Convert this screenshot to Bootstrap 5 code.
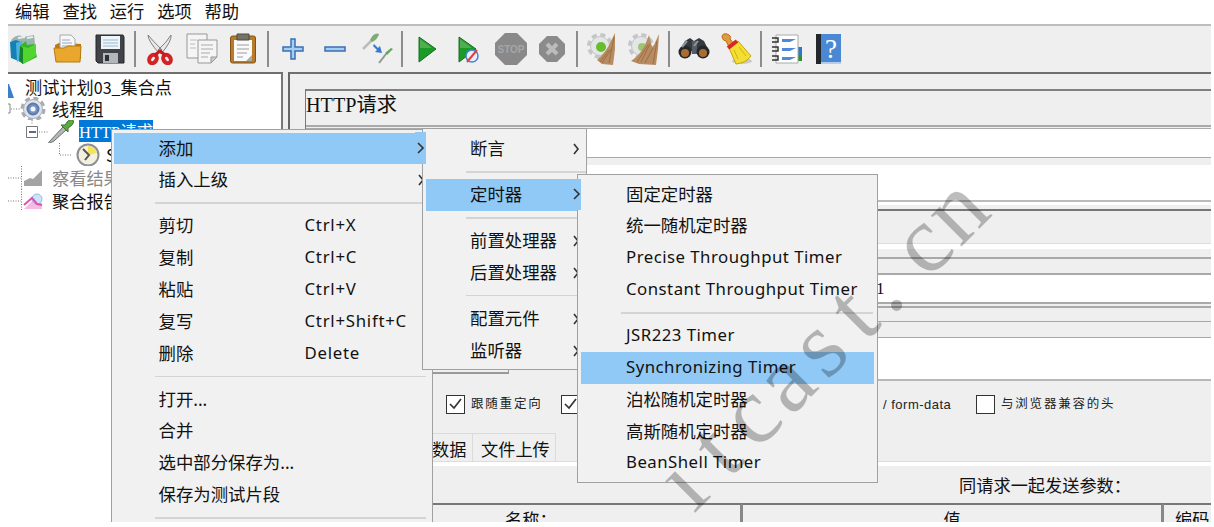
<!DOCTYPE html>
<html lang="zh-CN">
<head>
<meta charset="utf-8">
<meta name="viewport" content="width=device-width, initial-scale=1">
<title>HTTP请求</title>
<link href="https://cdn.jsdelivr.net/npm/bootstrap@5.3.0/dist/css/bootstrap.min.css" rel="stylesheet">
<style>
body{background:#fff;overflow:hidden;color:#111;font-family:"Noto Sans","Noto Sans CJK SC",sans-serif}
.app{width:1203px;height:522px;margin-left:8px;background:#fff;overflow:hidden}
.menubar{height:24px;font-size:17.3px;line-height:22px;padding-left:7px;gap:12.8px;white-space:nowrap;font-family:"Noto Sans CJK SC",sans-serif}
.toolbar{height:48px;background:#efefef;border-top:2px solid #bdbdbd}
.slot{width:41.8px;flex:none;display:flex;justify-content:center;align-items:center;height:46px}
.slot:first-child{margin-left:-4.6px;padding-right:2px;width:43.8px}
.slot svg{width:32px;height:32px;flex:none}
.vsep{width:8.2px;flex:none;display:flex;justify-content:center}
.vsep::before{content:"";width:2px;height:36px;background:#8c8c8c;margin-top:5px}
.main-area{height:450px;background:#efefef}
.tree{width:275px;height:450px;background:#fff;border-top:2px solid #6f6f6f;border-right:2px solid #777;font-size:17.2px;font-family:"Noto Sans CJK SC",sans-serif}
.trow{height:23.1px;line-height:23px;white-space:nowrap}
.trow svg{flex:none}
.sel{background:#0078d7;color:#fff;font:16.5px/25px "Liberation Serif","Noto Sans CJK SC",serif;width:74px;height:22px;overflow:hidden}
.editor{flex:1;margin-left:5px;border-left:2px solid #666;border-top:2px solid #6f6f6f;min-width:0}
.inner{margin-left:15px;border-left:1px solid #777}
.ttl{height:36px;border-top:2px solid #808080;font:20.2px/28px "Liberation Serif","Noto Sans CJK SC",serif}
.ln{background:#a9a9a9;flex:none}
.wh{background:#fff;flex:none}
.lab{font-size:12.5px;font-family:"Liberation Sans","Noto Sans CJK SC",sans-serif;letter-spacing:1.8px;color:#222;white-space:nowrap}
.box{width:19px;height:19px;border:1.5px solid #333;background:#fff;flex:none}
.box svg{display:block;width:16px;height:16px}
.big{font-size:17.2px;font-family:"Noto Sans CJK SC",sans-serif;white-space:nowrap}
.th-c{height:20px;overflow:hidden;border-top:2px solid #777;border-right:3px solid #888;line-height:27px;flex:none}
.tabx{border:1px solid #dadada;border-bottom:0;height:28px;line-height:29px}
.ctx{position:absolute;background:#f1f1f1;border:1.5px solid #a0a0a0;font-size:17.4px;overflow:hidden}
.ctx .it{height:31.85px;line-height:30px;display:flex;white-space:nowrap;position:relative}
.ctx .on{background:#90c8f6}
.ctx .hr{height:14.1px;display:flex;align-items:center}
.ctx .hr::before{content:"";height:1.5px;background:#d4d4d4;flex:1}
.m1{left:111px;top:129px;width:321.5px;height:393px;padding-top:2.5px;border-bottom:0}
.m1 .it{margin:0 6px 0 2px;padding-left:44.5px}
.m1 .hr{margin-left:43px;margin-right:6px}
.m1 .k{width:146px}
.m1 .en{letter-spacing:.75px}
.m2{left:422px;top:128px;width:165px;height:242px;padding-top:4px}
.m2 .it{margin:0 4px 0 2.5px;padding-left:44.5px}
.m2 .hr{margin-left:43px}
.m3{left:577px;top:174px;width:301px;height:308.5px;padding-top:3.5px}
.m3 .it{margin:0 3px 0 2.5px;padding-left:45.5px}
.m3 .hr{margin:0 4px 0 43px}
.it .ar{position:absolute;top:10px;width:8px;height:12px}
.ar path,.tip path{fill:none;stroke:#333;stroke-width:1.6}
.m1 .ar{right:0}.m2 .ar{right:1px}
.en{font-size:16.8px;letter-spacing:.48px}
.tip{position:absolute;height:32px;background:#90c8f6}
.wm{position:absolute;left:0;top:0;width:1214px;height:522px;pointer-events:none}
</style>
</head>
<body>
<div class="app">
  <nav class="menubar d-flex"><span>编辑</span><span>查找</span><span>运行</span><span>选项</span><span>帮助</span></nav>
  <div class="toolbar d-flex">
    <span class="slot"><svg viewBox="0 0 32 32"><path d="M3 7q7-7 12-3l11-2 2 18-16 8z" fill="#9bb4ae"/><path d="M2 9l6-2 5 2v20L3 25z" fill="#1580b5"/><path d="M8 10l6-2v18l-5 3z" fill="#4eb2df"/><path d="M12 13l6-5 1 4 7-1 3 13-14 7-3-3z" fill="#35b52b"/><path d="M12 13l8 2 8-4v12l-13 8z" fill="#52d530"/><path d="M12 13l3 2v16l-4-3z" fill="#148429"/><path d="M10 5l7-1m2 1l6-1" stroke="#e6eeee" stroke-width="2"/></svg></span>
    <span class="slot"><svg viewBox="0 0 32 32"><path d="M3 12l4-2h7l15 1v15H4z" fill="#b77a13"/><path d="M8 2h11l4 4v14H8z" fill="#f5f7fa" stroke="#aaa"/><path d="M10 7h8m-8 3h10m-10 3h10" stroke="#98a7bb"/><path d="M2 15h10l4-2h13l-1 16H4z" fill="#e9a72d" stroke="#b67a12"/></svg></span>
    <span class="slot"><svg viewBox="0 0 32 32"><path d="M2 2h27l1 2v26H4l-2-2z" fill="#414348" stroke="#24262a"/><path d="M7 3h19v13H7z" fill="#edf4fa"/><path d="M9 7h15m-15 3h15m-15 3h15" stroke="#9bbbd2"/><path d="M9 20h15v10H9z" fill="#b4b7ba"/><path d="M11 22h4v6h-4z" fill="#2c2f34"/></svg></span>
    <span class="vsep"></span>
    <span class="slot"><svg viewBox="0 0 32 32"><path d="M4 2q0 6 11 18l3-3Q9 8 4 2zM27 2q1 6-10 19l-3-4Q23 9 27 2z" fill="#e8e8e8" stroke="#808080"/><ellipse cx="9" cy="26" rx="3.500" ry="4.500" fill="none" stroke="#d32125" stroke-width="4" transform="rotate(35 9 26)"/><ellipse cx="23" cy="26" rx="3.500" ry="4.500" fill="none" stroke="#d32125" stroke-width="4" transform="rotate(-35 23 26)"/><path d="M11 22l5-4 5 4" stroke="#c21b20" stroke-width="3" fill="none"/></svg></span>
    <span class="slot"><svg viewBox="0 0 32 32" fill="#f5f5f5" stroke="#979797"><path d="M1 1h20v24H1z"/><path d="M4 7h7m-7 4h5m-5 4h6" stroke="#bbb"/><path d="M12 7h19v17l-6 6H12z"/><path d="M31 24h-6v6z" fill="#ccc"/><path d="M15 12h12m-12 4h12m-12 4h9m-9 4h7" stroke="#aaa"/></svg></span>
    <span class="slot"><svg viewBox="0 0 32 32"><rect x="3.500" y="3" width="25" height="27" rx="2" fill="#b77b29" stroke="#835316"/><path d="M7 7h18v21H7z" fill="#fafafa"/><path d="M10 1h12v6H10z" fill="#747466" stroke="#4c4b40"/><path d="M10 12h12m-12 4h12m-12 4h10m-10 4h6" stroke="#9c9c9c"/><path d="M25 22l-6 6h6z" fill="#aaa"/></svg></span>
    <span class="vsep"></span>
    <span class="slot"><svg viewBox="0 0 32 32"><path d="M14 6h4v8h8v4h-8v8h-4v-8H6v-4h8z" fill="#a4cef2" stroke="#3a6fb2" stroke-width="1.500"/></svg></span>
    <span class="slot"><svg viewBox="0 0 32 32"><path d="M6 14h20v4H6z" fill="#a4cef2" stroke="#3a6fb2" stroke-width="1.500"/></svg></span>
    <span class="slot"><svg viewBox="0 0 32 32"><path d="M2 16L12 6" stroke="#b8bfb8" stroke-width="2.500"/><path d="M9 7q4-8 9-6-1 5-7 8z" fill="#7faa75"/><path d="M18 30l7-9" stroke="#8f998f" stroke-width="2"/><path d="M24 20l6-5 2 1-6 6z" fill="#65a560"/><path d="M13 11l4 4 2-2 2 7-7-1 2-2-4-4z" fill="#3579d2"/></svg></span>
    <span class="vsep"></span>
    <span class="slot"><svg viewBox="0 0 32 32"><path d="M8 4l17 12L8 29z" fill="#1c9a28" stroke="#176e20"/><path d="M9 6l12 9H9z" fill="#4fae50"/></svg></span>
    <span class="slot"><svg viewBox="0 0 32 32"><path d="M6 4l17 12L6 29z" fill="#1c9a28" stroke="#176e20"/><path d="M7 6l12 9H7z" fill="#4fae50"/><circle cx="19" cy="23" r="6" fill="#e9eefb" stroke="#4784cf" stroke-width="1.500"/><path d="M14 29l10-12" stroke="#df4140" stroke-width="2"/></svg></span>
    <span class="slot"><svg viewBox="0 0 32 32"><path d="M10 0h12l10 10v12L22 32H10L0 22V10z" fill="#898989"/><text x="16" y="20" text-anchor="middle" font-family="Liberation Sans" font-weight="bold" font-size="10" fill="#a5a5a5">STOP</text></svg></span>
    <span class="slot"><svg viewBox="0 0 32 32"><path d="M11 3h10l8 8v10l-8 8H11l-8-8V11z" fill="#8b8b8b"/><path d="M11 11l10 10m0-10L11 21" stroke="#bcbcbc" stroke-width="4"/></svg></span>
    <span class="vsep"></span>
    <span class="slot"><svg viewBox="0 0 32 32"><circle cx="14" cy="13" r="11" fill="none" stroke="#c3c7c8" stroke-width="4" stroke-dasharray="5 3.640"/><circle cx="14" cy="13" r="9.500" fill="#e3e6e6" stroke="#c3c7c8"/><circle cx="15" cy="14" r="5" fill="#67bd2e"/><path d="M29 0l-4 8q-4 10-14 19l5 4 11 1 2-16z" fill="#b88b60"/><path d="M28 4l-5 26m3-15l-10 15m7-13l-9 12" stroke="#9b7048"/></svg></span>
    <span class="slot"><svg viewBox="0 0 32 32"><circle cx="13" cy="13" r="11" fill="none" stroke="#c3c7c8" stroke-width="4" stroke-dasharray="5 3.640"/><circle cx="13" cy="13" r="9.500" fill="#e3e6e6" stroke="#c3c7c8"/><circle cx="14" cy="14" r="4" fill="#9bc770"/><path d="M21 2l-4 10Q12 22 3 28l8 3 17 1 2-16 1-15-5 11-2 2z" fill="#b88b60"/><path d="M29 8l-4 23m-5-19L9 29m16-14l-8 15m5-19L13 29" stroke="#9b7048"/></svg></span>
    <span class="vsep"></span>
    <span class="slot"><svg viewBox="0 0 32 32"><path d="M7 8l5-3 4 3 5-3 5 3 5 10H1z" fill="#353a40"/><path d="M14 8h5v13h-5z" fill="#555d65"/><circle cx="7" cy="19" r="6.500" fill="#24272a"/><circle cx="25" cy="19" r="6.500" fill="#24272a"/><circle cx="7" cy="20" r="4" fill="#a96d32"/><circle cx="25" cy="20" r="4" fill="#a96d32"/><path d="M9 8l-5 6m16-6l-4 5" stroke="#8e969e" stroke-width="2"/></svg></span>
    <span class="slot"><svg viewBox="0 0 32 32"><ellipse cx="22" cy="28" rx="10" ry="3" fill="#c9c9c9"/><path d="M9 15l9-7 13 15q-5 7-15 8z" fill="#f4df30" stroke="#c5a515"/><path d="M2 4q0-4 5-3 5 2 3 5l4 5-5 3-3-6q-3 0-4-4z" fill="#e19b3d" stroke="#b56d1e"/><path d="M8 15l9-7" stroke="#db2722" stroke-width="4"/><path d="M14 17l4 9m1-12l7 9" stroke="#cdb020"/></svg></span>
    <span class="vsep"></span>
    <span class="slot"><svg viewBox="0 0 32 32"><path d="M27 14h5v8h-5z" fill="#2f78c7"/><path d="M27 22h5v6h-5z" fill="#269232"/><path d="M6 2h22v28H6z" fill="#fff" stroke="#aaa"/><path d="M12 6h14l-6 3h-8zm0 9h14l-6 3h-8zm0 9h14l-6 3h-8z" fill="#4f8ad8"/><path d="M2 5h6v4H2m0 5h6v4H2m0 5h6v4H2" fill="none" stroke="#333" stroke-width="1.500"/></svg></span>
    <span class="slot"><svg viewBox="0 0 32 32"><path d="M4 1h25v30H4z" fill="#4a88d4"/><path d="M4 1h5v30H4z" fill="#23262c"/><path d="M9 29h20v2H9z" fill="#b5cdec"/><text x="19" y="25" text-anchor="middle" font-family="Liberation Serif" font-size="27" fill="#fff">?</text></svg></span>
  </div>
  <div class="main-area d-flex">
    <div class="tree">
      <div class="trow d-flex" style="padding-top:1px"><svg width="17" height="23"><path d="M0 9l1 0 5 14H0z" fill="#3b7fca"/></svg><span>测试计划<span style="font-size:16px">03_</span>集合点</span></div>
      <div class="trow d-flex"><svg width="44" height="23"><path d="M0 7h2v9H0" fill="none" stroke="#888"/><path d="M3 12h9" stroke="#777" stroke-dasharray="1 1.500"/><circle cx="25" cy="12" r="10.500" fill="none" stroke="#a8adb5" stroke-width="4" stroke-dasharray="4.800 3.450"/><circle cx="25" cy="12" r="9.500" fill="#dfe2e7" stroke="#aab0ba"/><circle cx="25" cy="12" r="5.500" fill="#7795c4" stroke="#5b79aa" stroke-width="2"/><circle cx="25" cy="12" r="2.500" fill="#eff6ff"/></svg><span>线程组</span></div>
      <div class="trow d-flex"><svg width="71" height="23"><path d="M24 0v5M31 12h9" stroke="#777" stroke-dasharray="1 1.500"/><path d="M18.500 6.500h11v11h-11z" fill="#fff" stroke="#777"/><path d="M21 12h7" stroke="#223a70" stroke-width="1.500"/><path d="M41 22l14-15 3 3-12 11-6 3z" fill="#b3bab5" stroke="#68706b"/><path d="M53 5l4 0q4-7 8-5 2 4-5 8l0 4z" fill="#5aa944" stroke="#45712f"/></svg><span class="sel">HTTP请求</span></div>
      <div class="trow d-flex"><svg width="98" height="23"><path d="M51.500 0v12h13" fill="none" stroke="#777" stroke-dasharray="1 1.500"/><circle cx="80" cy="12" r="10.500" fill="#f4f0df" stroke="#8c8f94" stroke-width="2"/><path d="M80 12l0-9a9 9 0 0 1 9 7z" fill="#f4e45a"/><path d="M75 6l6 6-4 5" fill="none" stroke="#555" stroke-width="2"/></svg><span>S</span></div>
      <div class="trow d-flex" style="color:#888"><svg width="44" height="24"><path d="M0 12h13M13.500 0v24" stroke="#777" stroke-dasharray="1 1.500"/><path d="M16 20v-5l6-3 3 1 9-9v16z" fill="#a4a4a4"/></svg><span>察看结果</span></div>
      <div class="trow d-flex"><svg width="44" height="23"><path d="M0 12h13M13.500 0v22" stroke="#777" stroke-dasharray="1 1.500"/><path d="M16 20l8-8 10 2v6z" fill="#f4bce3"/><circle cx="29" cy="10" r="5" fill="#cee4fa" stroke="#8fbce8"/><path d="M16 16l8-7 5 6 5 1" fill="none" stroke="#da55b0" stroke-width="2"/></svg><span>聚合报告</span></div>
    </div>
    <div class="editor">
      <div style="height:15px"></div>
      <div class="inner">
        <div class="ttl">HTTP请求</div>
        <div class="ln" style="height:1.500px"></div><div style="height:1.500px"></div><div class="ln" style="height:1px"></div>
        <div class="wh" style="height:28px"></div><div class="ln" style="height:1px"></div>
        <div style="height:7px"></div><div class="wh" style="height:35px"></div>
        <div class="ln" style="height:2px;background:#bbb"></div><div class="wh" style="height:3px"></div><div style="height:4px"></div><div class="ln" style="height:2px;background:#777"></div>
        <div style="height:32px"></div><div class="ln" style="height:1px;background:#ddd"></div><div class="wh" style="height:5px"></div>
        <div style="height:8px"></div><div class="ln" style="height:2px"></div><div style="height:14px"></div><div class="ln" style="height:2px"></div>
        <div class="wh d-flex align-items-center" style="height:27px;padding-left:570px;font:17px 'Liberation Serif',serif">1</div>
        <div class="ln" style="height:2px"></div><div style="height:2px"></div><div class="ln" style="height:2px"></div>
        <div style="height:13px"></div><div class="ln" style="height:1px"></div><div style="height:15px"></div><div class="ln" style="height:1px"></div>
        <div class="d-flex" style="height:43px"><div style="width:203px;border-right:1px solid #999;border-bottom:2px solid #999;height:36px"></div><div class="wh" style="margin-left:79px;flex:1;border-bottom:2px solid #b8b8b8"></div></div>
        <div class="d-flex align-items-center lab" style="height:47px;padding-left:140px"><span class="box"><svg viewBox="0 0 16 16"><path d="M3 8l4 4 7-9" fill="none" stroke="#333" stroke-width="1.700"/></svg></span><span style="width:90px;margin-left:6px">跟随重定向</span><span class="box"><svg viewBox="0 0 16 16"><path d="M3 8l4 4 7-9" fill="none" stroke="#333" stroke-width="1.700"/></svg></span><span style="margin-left:303px;width:93px;letter-spacing:.5px;font-size:13px">/ form-data</span><span class="box"></span><span style="margin-left:6px">与浏览器兼容的头</span></div>
        <div class="d-flex align-items-end big" style="height:34px;padding-left:125px;border-bottom:1px solid #ddd"><span class="tabx" style="width:42px">数据</span><span class="tabx" style="width:83px;padding-left:8px;border-left:0">文件上传</span></div>
        <div class="wh" style="height:4px"></div>
        <div class="big text-end" style="height:37px;line-height:38px;padding-right:80px">同请求一起发送参数：</div>
      </div>
      <div class="big d-flex" style="margin-left:15px"><div class="th-c" style="width:438px;padding-left:200px">名称：</div><div class="th-c text-center" style="width:421px">值</div><div class="th-c" style="width:60px;padding-left:11px;border-right:0">编码</div></div>
    </div>
  </div>
</div>

<div class="ctx m1">
  <div class="it on">添加<svg class="ar"><path d="M1 1l4 5-4 5"/></svg></div>
  <div class="it">插入上级<svg class="ar"><path d="M1 1l4 5-4 5"/></svg></div>
  <div class="hr"></div>
  <div class="it"><span class="k">剪切</span><span class="en">Ctrl+X</span></div>
  <div class="it"><span class="k">复制</span><span class="en">Ctrl+C</span></div>
  <div class="it"><span class="k">粘贴</span><span class="en">Ctrl+V</span></div>
  <div class="it"><span class="k">复写</span><span class="en">Ctrl+Shift+C</span></div>
  <div class="it"><span class="k">删除</span><span class="en">Delete</span></div>
  <div class="hr"></div>
  <div class="it">打开...</div>
  <div class="it">合并</div>
  <div class="it">选中部分保存为...</div>
  <div class="it">保存为测试片段</div>
  <div class="hr"></div>
</div>
<div class="ctx m2">
  <div class="it">断言<svg class="ar"><path d="M1 1l4 5-4 5"/></svg></div>
  <div class="hr"></div>
  <div class="it on">定时器</div>
  <div class="hr"></div>
  <div class="it">前置处理器<svg class="ar"><path d="M1 1l4 5-4 5"/></svg></div>
  <div class="it">后置处理器<svg class="ar"><path d="M1 1l4 5-4 5"/></svg></div>
  <div class="hr"></div>
  <div class="it">配置元件<svg class="ar"><path d="M1 1l4 5-4 5"/></svg></div>
  <div class="it">监听器<svg class="ar"><path d="M1 1l4 5-4 5"/></svg></div>
</div>
<div class="ctx m3">
  <div class="it">固定定时器</div>
  <div class="it">统一随机定时器</div>
  <div class="it en">Precise Throughput Timer</div>
  <div class="it en">Constant Throughput Timer</div>
  <div class="hr"></div>
  <div class="it en">JSR223 Timer</div>
  <div class="it en on">Synchronizing Timer</div>
  <div class="it">泊松随机定时器</div>
  <div class="it">高斯随机定时器</div>
  <div class="it en">BeanShell Timer</div>
</div>
<svg class="tip" style="left:415px;top:132px;width:10.500px"><path d="M3 11l5 5-5 5"/></svg>
<svg class="tip" style="left:570px;top:179px;width:11px;height:31px"><path d="M4 10l5 5-5 5"/></svg>
<svg class="wm" viewBox="0 0 1214 522">
  <defs><clipPath id="wmclip"><path d="M-30-46H24V-90H440V30H-30z"/></clipPath></defs>
  <g transform="translate(703 505) rotate(-45)"><g clip-path="url(#wmclip)"><text x="0 48.400 96.800 145.200 193.600 242 278 338.800 387.200" y="0" text-anchor="middle" font-family="Liberation Serif" font-size="95" fill="#000" fill-opacity=".26">itcast.cn</text></g></g>
</svg>
<script src="https://cdn.jsdelivr.net/npm/bootstrap@5.3.0/dist/js/bootstrap.bundle.min.js"></script>
</body>
</html>
